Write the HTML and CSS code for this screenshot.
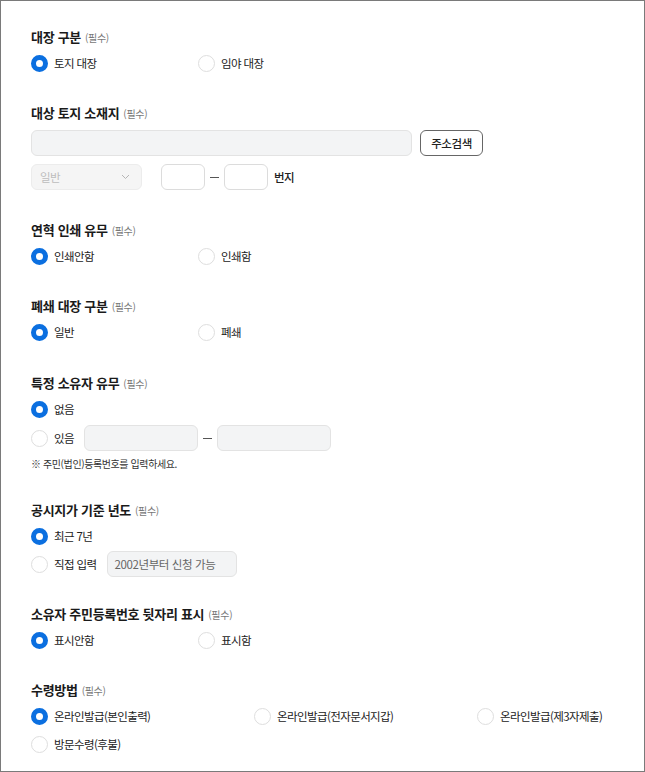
FILE: index.html
```html
<!DOCTYPE html>
<html lang="ko">
<head>
<meta charset="utf-8">
<link rel="stylesheet" href="styles.css">
</head>
<body>
<div class="frame">
  <section class="sec">
    <h3 class="title">대장 구분 <span class="req">(필수)</span></h3>
    <div class="row two">
      <label class="radio on"><span class="dot"></span>토지 대장</label>
      <label class="radio"><span class="dot"></span>임야 대장</label>
    </div>
  </section>

  <section class="sec">
    <h3 class="title">대상 토지 소재지 <span class="req">(필수)</span></h3>
    <div class="addr">
      <div class="field addr-input"></div>
      <button class="btn">주소검색</button>
    </div>
    <div class="lot">
      <div class="select">일반<svg class="chev" width="9" height="6" viewBox="0 0 9 6"><path d="M1 1l3.5 3.5L8 1" fill="none" stroke="#b5b5b5" stroke-width="1"/></svg></div>
      <div class="field white small"></div>
      <span class="dash"></span>
      <div class="field white small"></div>
      <span class="unit">번지</span>
    </div>
  </section>

  <section class="sec">
    <h3 class="title">연혁 인쇄 유무 <span class="req">(필수)</span></h3>
    <div class="row two">
      <label class="radio on"><span class="dot"></span>인쇄안함</label>
      <label class="radio"><span class="dot"></span>인쇄함</label>
    </div>
  </section>

  <section class="sec">
    <h3 class="title">폐쇄 대장 구분 <span class="req">(필수)</span></h3>
    <div class="row two">
      <label class="radio on"><span class="dot"></span>일반</label>
      <label class="radio"><span class="dot"></span>폐쇄</label>
    </div>
  </section>

  <section class="sec s5">
    <h3 class="title">특정 소유자 유무 <span class="req">(필수)</span></h3>
    <div class="row">
      <label class="radio on"><span class="dot"></span>없음</label>
    </div>
    <div class="row inrow">
      <label class="radio"><span class="dot"></span>있음</label>
      <div class="field mid"></div>
      <span class="dash"></span>
      <div class="field mid"></div>
    </div>
    <p class="note">※ 주민(법인)등록번호를 입력하세요.</p>
  </section>

  <section class="sec s6">
    <h3 class="title">공시지가 기준 년도 <span class="req">(필수)</span></h3>
    <div class="row">
      <label class="radio on"><span class="dot"></span>최근 7년</label>
    </div>
    <div class="row inrow">
      <label class="radio"><span class="dot"></span>직접 입력</label>
      <div class="field year">2002년부터 신청 가능</div>
    </div>
  </section>

  <section class="sec">
    <h3 class="title">소유자 주민등록번호 뒷자리 표시 <span class="req">(필수)</span></h3>
    <div class="row two">
      <label class="radio on"><span class="dot"></span>표시안함</label>
      <label class="radio"><span class="dot"></span>표시함</label>
    </div>
  </section>

  <section class="sec">
    <h3 class="title">수령방법 <span class="req">(필수)</span></h3>
    <div class="row three">
      <label class="radio on"><span class="dot"></span>온라인발급(본인출력)</label>
      <label class="radio"><span class="dot"></span>온라인발급(전자문서지갑)</label>
      <label class="radio"><span class="dot"></span>온라인발급(제3자제출)</label>
    </div>
    <div class="row r2">
      <label class="radio"><span class="dot"></span>방문수령(후불)</label>
    </div>
  </section>
</div>
</body>
</html>
```

FILE: styles.css
```css
* { box-sizing: border-box; }
html, body { margin: 0; padding: 0; background: #fff; }
body {
  font-family: "Noto Sans CJK KR", "Noto Sans", sans-serif;
  color: #222;
  font-size: 12px;
}
.frame {
  width: 645px;
  height: 772px;
  border: 1px solid #7a7a7a;
  padding: 26px 30px 0 30px;
  display: flex;
  flex-direction: column;
  gap: 30px;
  overflow: hidden;
}
.sec { display: flex; flex-direction: column; flex: none; }
.title {
  margin: 0;
  height: 20px;
  display: flex;
  align-items: center;
  gap: 4px;
  font-size: 13px;
  font-weight: 700;
  line-height: 20px;
  color: #1a1a1a;
  letter-spacing: -0.3px;
  white-space: nowrap;
}
.req {
  font-size: 10px;
  font-weight: 400;
  line-height: 12px;
  color: #777;
  padding-top: 1px;
}
.row {
  display: flex;
  align-items: center;
  margin-top: 6px;
  height: 20px;
  flex: none;
}
.two .radio { width: 167px; flex: none; }
.three .radio { width: 223px; flex: none; }
.radio {
  display: flex;
  align-items: center;
  gap: 6px;
  height: 20px;
  font-size: 11.5px;
  line-height: 20px;
  color: #222;
  letter-spacing: -0.6px;
  white-space: nowrap;
  flex: none;
}
.dot {
  width: 17px;
  height: 17px;
  border-radius: 50%;
  border: 1px solid #dedede;
  background: #fff;
  flex: none;
}
.radio.on .dot { border: 5px solid #0b6fe0; }
.addr { display: flex; gap: 8px; margin-top: 7px; height: 26px; flex: none; }
.field {
  height: 26px;
  border: 1px solid #e3e3e3;
  background: #f3f4f5;
  border-radius: 6px;
  flex: none;
}
.addr-input { width: 381px; }
.btn {
  width: 63px;
  height: 26px;
  border: 1px solid #666;
  border-radius: 6px;
  background: #fff;
  font-family: inherit;
  font-size: 11.5px;
  font-weight: 500;
  color: #222;
  padding: 0;
  letter-spacing: -0.4px;
}
.lot { display: flex; align-items: center; margin-top: 8px; height: 26px; flex: none; }
.select {
  width: 111px;
  height: 26px;
  border: 1px solid #ececec;
  background: #f5f5f5;
  border-radius: 6px;
  display: flex;
  align-items: center;
  justify-content: space-between;
  padding: 0 11px 0 8px;
  color: #bdbdbd;
  font-size: 11.5px;
  letter-spacing: -0.5px;
  margin-right: 19px;
  flex: none;
}
.field.white { background: #fff; border-color: #dcdcdc; }
.small { width: 44px; }
.dash {
  width: 9px;
  height: 1px;
  background: #555;
  margin: 0 5px;
  flex: none;
}
.unit { margin-left: 6px; font-weight: 500; color: #222; font-size: 11.5px; letter-spacing: -0.5px; }
.inrow { height: 26px; }
.s5 .inrow { margin-top: 6px; }
.mid { width: 114px; margin-left: 10px; }
.mid + .dash + .mid { margin-left: 0; }
.note {
  margin: 5px 0 0;
  font-size: 10px;
  line-height: 16px;
  height: 16px;
  color: #333;
  letter-spacing: -0.4px;
}
.s5 { margin-top: 1px; margin-bottom: -2px; }
.s6 .inrow { margin-top: 5px; }
.s6 { margin-bottom: -3px; }
.year {
  width: 130px;
  margin-left: 10px;
  padding-left: 7px;
  display: flex;
  align-items: center;
  color: #666;
  font-size: 11.5px;
  letter-spacing: -0.4px;
}
.r2 { margin-top: 8px; }
```
